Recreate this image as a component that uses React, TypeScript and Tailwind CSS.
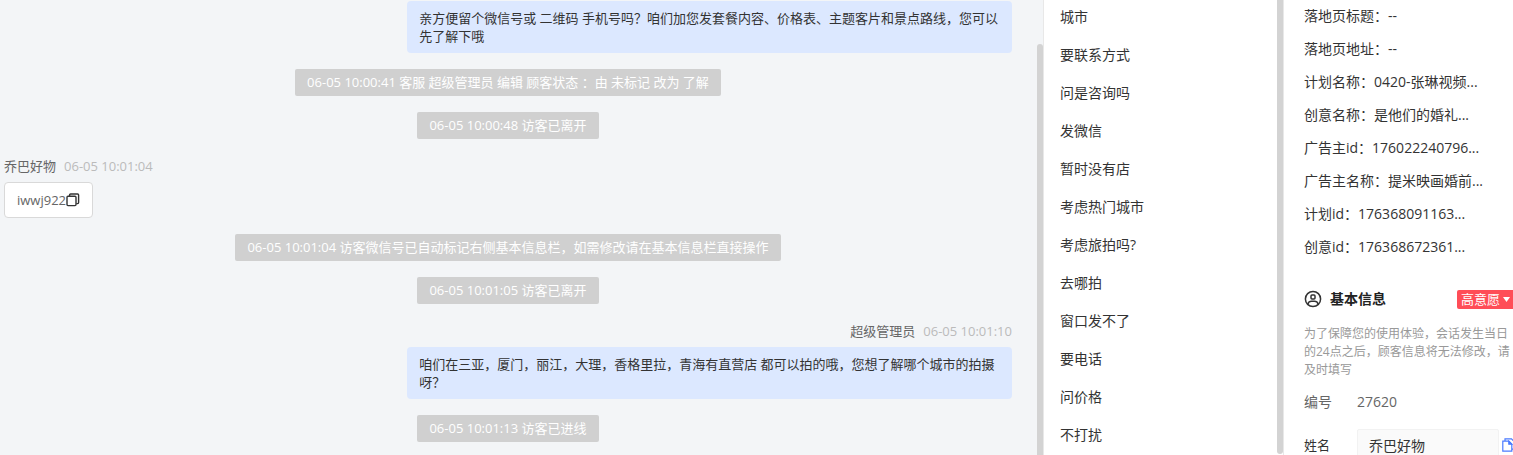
import React, { useState } from "react";

type ChatItem =
  | { kind: "notice"; time: string; text: string }
  | { kind: "staff"; name?: string; time?: string; text: string }
  | { kind: "visitor"; name: string; time: string; text: string };

const chatItems: ChatItem[] = [
  { kind: "staff", text: "亲方便留个微信号或 二维码 手机号吗？咱们加您发套餐内容、价格表、主题客片和景点路线，您可以先了解下哦" },
  { kind: "notice", time: "06-05 10:00:41", text: "客服 超级管理员 编辑 顾客状态 ：由 未标记 改为 了解" },
  { kind: "notice", time: "06-05 10:00:48", text: "访客已离开" },
  { kind: "visitor", name: "乔巴好物", time: "06-05 10:01:04", text: "iwwj922" },
  { kind: "notice", time: "06-05 10:01:04", text: "访客微信号已自动标记右侧基本信息栏，如需修改请在基本信息栏直接操作" },
  { kind: "notice", time: "06-05 10:01:05", text: "访客已离开" },
  { kind: "staff", name: "超级管理员", time: "06-05 10:01:10", text: "咱们在三亚，厦门，丽江，大理，香格里拉，青海有直营店 都可以拍的哦，您想了解哪个城市的拍摄呀？" },
  { kind: "notice", time: "06-05 10:01:13", text: "访客已进线" },
];

const quickReplies = [
  "城市",
  "要联系方式",
  "问是咨询吗",
  "发微信",
  "暂时没有店",
  "考虑热门城市",
  "考虑旅拍吗?",
  "去哪拍",
  "窗口发不了",
  "要电话",
  "问价格",
  "不打扰",
];

const sourceInfo = [
  { label: "落地页标题", value: "--" },
  { label: "落地页地址", value: "--" },
  { label: "计划名称", value: "0420-张琳视频..." },
  { label: "创意名称", value: "是他们的婚礼..." },
  { label: "广告主id", value: "176022240796..." },
  { label: "广告主名称", value: "提米映画婚前..." },
  { label: "计划id", value: "176368091163..." },
  { label: "创意id", value: "176368672361..." },
];

function CopyIcon() {
  return (
    <svg width="14" height="14" viewBox="0 0 14 14" fill="none" stroke="#333" strokeWidth="1.4">
      <rect x="1" y="3.2" width="9" height="9.4" rx="1" />
      <path d="M3.6 3V2a1 1 0 0 1 1-1h7a1 1 0 0 1 1 1v7.6a1 1 0 0 1-1 1h-1.3" />
    </svg>
  );
}

function UserIcon() {
  return (
    <svg width="18" height="18" viewBox="0 0 18 18" fill="none" stroke="#333" strokeWidth="1.5">
      <circle cx="9" cy="9" r="7.6" />
      <rect x="7" y="4.9" width="4" height="4" rx="1" />
      <path d="M3.8 14.2c.6-2 2-2.9 3.7-2.9h3c1.7 0 3.1.9 3.7 2.9" />
    </svg>
  );
}

function PagesIcon() {
  return (
    <svg width="14" height="14" viewBox="0 0 14 14" fill="none" stroke="#4b7bff" strokeWidth="1.2">
      <path d="M.8 3.2h6l3 3v7H.8z" />
      <path d="M6.8 3.2v3h3z" fill="#4b7bff" />
      <path d="M3 3V.8h6.5l3 3v7.4H10" />
    </svg>
  );
}

function MessageHeader({ name, time }: { name: string; time?: string }) {
  return (
    <div className="mb-1 flex items-center gap-2 leading-[23px]">
      <span className="text-[#666]">{name}</span>
      <span className="text-[#bbb]">{time}</span>
    </div>
  );
}

function ChatRow({ item }: { item: ChatItem }) {
  if (item.kind === "notice") {
    return (
      <div className="self-center rounded-xs bg-[#d0d0d0] px-3 text-white leading-[27px]">
        {item.time} {item.text}
      </div>
    );
  }
  if (item.kind === "visitor") {
    return (
      <div className="flex max-w-[60%] flex-col items-start self-start">
        <MessageHeader name={item.name} time={item.time} />
        <div className="flex items-center rounded-sm border border-[#d9d9d9] bg-white px-3 py-2 leading-[18px] text-[#666]">
          {item.text}
          <button type="button" aria-label="复制">
            <CopyIcon />
          </button>
        </div>
      </div>
    );
  }
  return (
    <div className="flex max-w-[60%] flex-col items-end self-end">
      {item.name && <MessageHeader name={item.name} time={item.time} />}
      <div className="rounded-sm bg-[#dce8ff] px-3 py-2 leading-[18px] text-[#333]">{item.text}</div>
    </div>
  );
}

export default function App() {
  const [name, setName] = useState("乔巴好物");
  const [intent, setIntent] = useState("高意愿");

  return (
    <div
      lang="zh-CN"
      className="flex h-screen overflow-hidden bg-white font-['Open_Sans','Noto_Sans_CJK_SC',sans-serif] text-sm text-[#333]"
    >
      {/* Conversation */}
      <main className="flex min-w-0 flex-1 border-r border-[#e8e8e8] bg-[#f3f5f7]">
        <div className="flex min-w-0 flex-1 flex-col gap-4 pt-px pr-[25px] pl-1 text-[13px]">
          {chatItems.map((item, i) => (
            <ChatRow key={i} item={item} />
          ))}
        </div>
        <div className="mt-11 w-1.5 shrink-0 rounded-t-full bg-[#d3d3d3]" />
      </main>

      {/* Quick replies */}
      <aside className="flex w-60 shrink-0 border-r border-[#e8e8e8]">
        <ul className="flex flex-1 flex-col gap-4 pt-1.5 pl-4 leading-[22px]">
          {quickReplies.map(reply => (
            <li key={reply} className="h-[22px] shrink-0">
              <button type="button">{reply}</button>
            </li>
          ))}
        </ul>
        <div className="mb-px w-1.5 shrink-0 rounded-b-full bg-[#d3d3d3]" />
      </aside>

      {/* Visitor details */}
      <aside className="w-[229px] shrink-0 overflow-hidden pt-[5px] pl-5">
        <dl className="flex flex-col gap-[11px] leading-[22px]">
          {sourceInfo.map(row => (
            <div key={row.label} className="flex h-[22px] whitespace-nowrap">
              <dt>{row.label}：</dt>
              <dd>{row.value}</dd>
            </div>
          ))}
        </dl>

        <div className="mt-[30px] flex h-[22px] items-center">
          <UserIcon />
          <h2 className="ml-2 flex-1 font-bold text-[#222]">基本信息</h2>
          <div className="relative">
            <select
              aria-label="意愿"
              value={intent}
              onChange={e => setIntent(e.target.value)}
              className="block h-[19px] w-14 appearance-none rounded-l-xs bg-[#ff4d57] pl-1 text-[13px] leading-[19px] text-white"
            >
              <option>高意愿</option>
              <option>低意愿</option>
            </select>
            <svg className="pointer-events-none absolute top-[7px] right-[3px]" width="7" height="5" viewBox="0 0 7 5" fill="#fff">
              <path d="M0 0h7L3.5 5z" />
            </svg>
          </div>
        </div>

        <p className="mt-[15px] text-xs leading-[18px] text-[#999]">
          为了保障您的使用体验，会话发生当日的24点之后，顾客信息将无法修改，请及时填写
        </p>

        <div className="mt-3 flex leading-[22px] text-[#666]">
          <span className="w-[53px]">编号</span>
          <span>27620</span>
        </div>

        <div className="mt-4 flex h-8 items-center">
          <label htmlFor="visitor-name" className="w-[53px] shrink-0 text-[13px]">
            姓名
          </label>
          <input
            id="visitor-name"
            value={name}
            onChange={e => setName(e.target.value)}
            className="h-8 w-[142px] shrink-0 rounded-xs border border-[#f2f2f2] bg-[#fafafa] px-[11px]"
          />
          <button type="button" aria-label="复制姓名" className="ml-[3px] shrink-0">
            <PagesIcon />
          </button>
        </div>
      </aside>
    </div>
  );
}
